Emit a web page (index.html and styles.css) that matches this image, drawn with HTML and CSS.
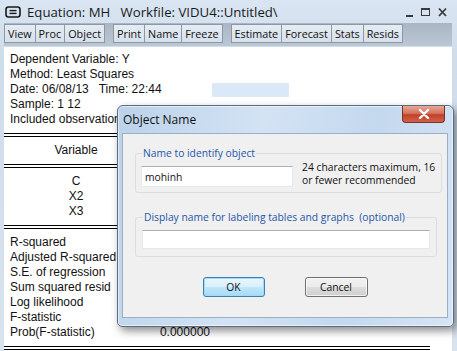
FILE: index.html
```html
<!DOCTYPE html>
<html lang="en">
<head>
    <meta charset="UTF-8">
    <title>Equation: MH</title>
    <link rel="stylesheet" href="styles.css">
</head>
<body>
    <div class="window">
        <div class="titlebar">
            <svg class="app-icon" width="16" height="12" viewBox="0 0 16 12">
                <rect x="1" y="1" width="14" height="10" rx="2.5" fill="none" stroke="#1b1b1b" stroke-width="1.6"/>
                <line x1="4.5" y1="4.6" x2="11.5" y2="4.6" stroke="#1b1b1b" stroke-width="1.4"/>
                <line x1="4.5" y1="7.4" x2="11.5" y2="7.4" stroke="#1b1b1b" stroke-width="1.4"/>
            </svg>
            <span class="title">Equation: MH&nbsp;&nbsp;&nbsp;Workfile: VIDU4::Untitled\</span>
            <div class="win-ctrls">
                <svg width="44" height="12" viewBox="0 0 44 12">
                    <rect x="1" y="8" width="7" height="2" fill="#3a3a3a"/>
                    <rect x="16.5" y="1.5" width="8" height="7" fill="none" stroke="#3a3a3a" stroke-width="1"/>
                    <rect x="16" y="1" width="9" height="2" fill="#3a3a3a"/>
                    <path d="M34 1.5 L41 9 M41 1.5 L34 9" stroke="#3a3a3a" stroke-width="1.8"/>
                </svg>
            </div>
        </div>

        <div class="toolbar">
            <div class="tb-group">
                <button class="tb-btn">View</button>
                <button class="tb-btn">Proc</button>
                <button class="tb-btn">Object</button>
            </div>
            <div class="tb-group">
                <button class="tb-btn">Print</button>
                <button class="tb-btn">Name</button>
                <button class="tb-btn">Freeze</button>
            </div>
            <div class="tb-group">
                <button class="tb-btn">Estimate</button>
                <button class="tb-btn">Forecast</button>
                <button class="tb-btn">Stats</button>
                <button class="tb-btn">Resids</button>
            </div>
        </div>

        <div class="output">
            <div class="hilite"></div>
            <div class="info">
                <div>Dependent Variable: Y</div>
                <div>Method: Least Squares</div>
                <div>Date: 06/08/13&nbsp;&nbsp;&nbsp;Time: 22:44</div>
                <div>Sample: 1 12</div>
                <div>Included observations: 12</div>
            </div>
            <div class="rule"></div>
            <div class="var-row">Variable</div>
            <div class="rule"></div>
            <div class="var-row">C</div>
            <div class="var-row">X2</div>
            <div class="var-row">X3</div>
            <div class="rule"></div>
            <div class="stat-row"><span>R-squared</span><span></span></div>
            <div class="stat-row"><span>Adjusted R-squared</span><span></span></div>
            <div class="stat-row"><span>S.E. of regression</span><span></span></div>
            <div class="stat-row"><span>Sum squared resid</span><span></span></div>
            <div class="stat-row"><span>Log likelihood</span><span></span></div>
            <div class="stat-row"><span>F-statistic</span><span></span></div>
            <div class="stat-row"><span>Prob(F-statistic)</span><span class="val">0.000000</span></div>
            <div class="rule"></div>
        </div>

        <div class="dialog">
            <div class="dlg-title">Object Name</div>
            <button class="dlg-close">
                <svg width="12" height="10" viewBox="0 0 12 10">
                    <path d="M2 1 L10 9 M10 1 L2 9" stroke="#fff" stroke-width="2.4" stroke-linecap="round"/>
                </svg>
            </button>
            <div class="dlg-client">
                <fieldset class="group first">
                    <legend>Name to identify object</legend>
                    <div class="name-line">
                        <input type="text" class="name-input" value="mohinh">
                        <p class="hint">24 characters maximum, 16<br>or fewer recommended</p>
                    </div>
                </fieldset>
                <fieldset class="group second">
                    <legend>Display name for labeling tables and graphs&nbsp; (optional)</legend>
                    <input type="text" class="display-input">
                </fieldset>
                <div class="dlg-buttons">
                    <button class="dlg-btn ok">OK</button>
                    <button class="dlg-btn">Cancel</button>
                </div>
            </div>
        </div>
    </div>
</body>
</html>
```

FILE: styles.css
```css
* {
    margin: 0;
    padding: 0;
    box-sizing: border-box;
}
body {
    width: 457px;
    height: 351px;
    overflow: hidden;
    background: #d6e2ef;
    font-family: 'Open Sans', sans-serif;
}
.window {
    position: relative;
    width: 457px;
    height: 351px;
    display: flex;
    flex-direction: column;
    background: linear-gradient(#d9e5f2, #cfdcea 60px, #d8e3ef);
}
.titlebar {
    height: 23px;
    display: flex;
    align-items: center;
    padding-left: 5px;
    flex-shrink: 0;
}
.app-icon {
    margin-right: 6px;
}
.title {
    font-size: 13.2px;
    color: #1a1a1a;
}
.win-ctrls {
    margin-left: auto;
    margin-right: 8px;
    display: flex;
    padding-top: 2px;
}
.toolbar {
    height: 23px;
    margin: 0 5px 0 4px;
    display: flex;
    align-items: flex-start;
    gap: 8px;
    padding-top: 1px;
    background: linear-gradient(#aab6c4, #bcc7d4);
    flex-shrink: 0;
}
.tb-group {
    display: flex;
    background: #dde5ee;
}
.tb-btn {
    height: 19px;
    padding: 0 3px;
    border: 1px solid #8a98aa;
    border-left-width: 0;
    background: linear-gradient(#e6ecf3, #d7e0ea);
    font-family: 'Open Sans', sans-serif;
    font-size: 10.8px;
    color: #111;
    line-height: 17px;
}
.tb-btn:first-child {
    border-left-width: 1px;
}
.output {
    position: relative;
    flex: 1;
    margin: 1px 5px 0 4px;
    background: #fff;
    padding-top: 5px;
    font-family: 'Liberation Sans', Arial, sans-serif;
    font-size: 12px;
    line-height: 15px;
    color: #111;
}
.hilite {
    position: absolute;
    left: 208px;
    top: 36px;
    width: 77px;
    height: 14px;
    background: #dbe8f7;
}
.info {
    position: relative;
    padding-left: 6px;
}
.rule {
    width: 426px;
    height: 4px;
    margin: 6px 0;
    border-top: 1px solid #000;
    border-bottom: 1px solid #000;
}
.var-row {
    width: 144px;
    text-align: center;
}
.stat-row {
    display: grid;
    grid-template-columns: 144px 56px;
    padding-left: 6px;
}
.val {
    text-align: right;
}
.dialog {
    position: absolute;
    left: 117px;
    top: 105px;
    width: 337px;
    height: 222px;
    border: 1px solid #5b6c80;
    border-radius: 6px 6px 5px 5px;
    background: linear-gradient(100deg, #bcd2ea 0%, #d3e3f4 40%, #c4d8ee 70%, #d6e5f5 100%);
    box-shadow: 3px 4px 9px rgba(0, 0, 0, 0.45), inset 0 0 0 1px rgba(255, 255, 255, 0.55);
    font-family: 'Open Sans', sans-serif;
}
.dlg-title {
    height: 27px;
    padding: 5px 0 0 5px;
    font-size: 12px;
    color: #111;
}
.dlg-close {
    position: absolute;
    top: 0;
    right: 8px;
    width: 43px;
    height: 17px;
    border: 1px solid #7a3328;
    border-top: none;
    border-radius: 0 0 4px 4px;
    background: linear-gradient(#e8a796, #d5735e 45%, #c2412a 55%, #d0614a);
    display: flex;
    align-items: center;
    justify-content: center;
}
.dlg-client {
    margin: 0 5px 0 4px;
    height: 185px;
    background: #f0f0f0;
    border: 1px solid #9bb0c8;
    font-size: 10.3px;
    color: #111;
}
.group {
    margin: 12px 10px 0 12px;
    border: 1px solid #d5dfe5;
    border-radius: 3px;
}
.group legend {
    margin-left: 1px;
    padding: 0 1px;
    color: #1f56a8;
    line-height: 14px;
}
.group.first {
    padding: 6px 6px 5px 5px;
}
.group.second {
    margin-top: 17px;
    padding: 6px 6px 7px 6px;
}
.name-line {
    display: flex;
    align-items: flex-start;
    height: 21px;
}
.name-input, .display-input {
    display: block;
    background: #fff;
    border: 1px solid #e3e9ef;
    border-top-color: #abadb3;
    font-family: 'Open Sans', sans-serif;
    font-size: 10.3px;
    color: #111;
    padding: 0 3px;
}
.name-input {
    width: 152px;
    height: 21px;
    flex-shrink: 0;
}
.display-input {
    width: 100%;
    height: 19px;
}
.hint {
    margin: -5px 0 0 9px;
    line-height: 13px;
    white-space: nowrap;
}
.dlg-buttons {
    display: flex;
    justify-content: center;
    gap: 40px;
    margin-top: 20px;
}
.dlg-btn {
    width: 63px;
    height: 20px;
    border: 1px solid #707070;
    border-radius: 3px;
    background: linear-gradient(#f2f2f2, #ebebeb 48%, #dddddd 52%, #cfcfcf);
    box-shadow: inset 0 0 0 1px rgba(255, 255, 255, 0.7);
    font-family: 'Open Sans', sans-serif;
    font-size: 10.3px;
    color: #111;
}
.dlg-btn.ok {
    width: 62px;
    border-color: #3c7fb1;
    background: linear-gradient(#eaf6fd, #d9f0fc 48%, #bee6fd 52%, #a7d9f5);
    box-shadow: inset 0 0 0 1px #9fdcf7;
}
```
